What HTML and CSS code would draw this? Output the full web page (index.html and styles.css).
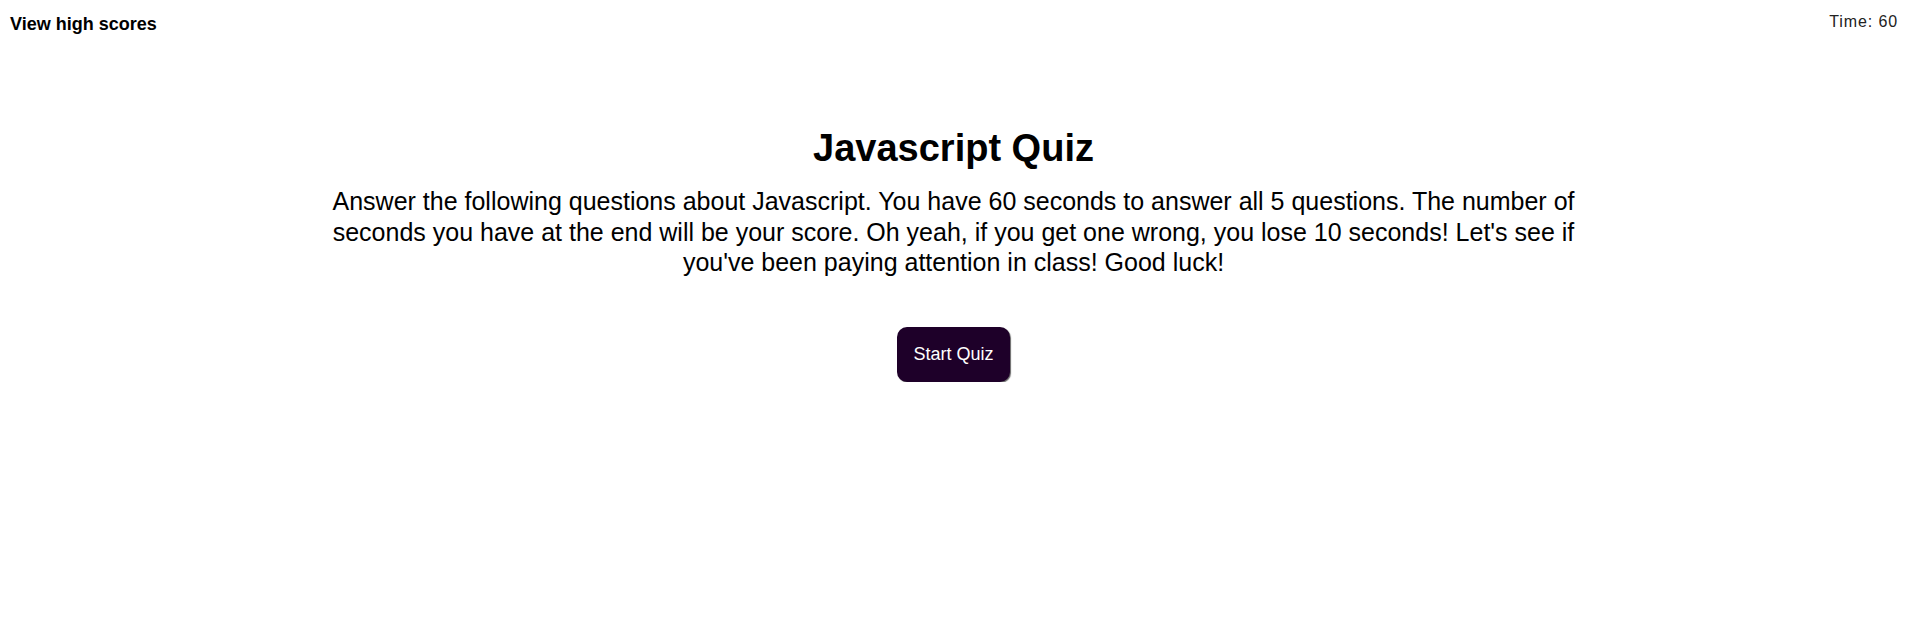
FILE: index.html
```html
<!DOCTYPE html>
<html lang="en">
<head>
<meta charset="utf-8">
<title>Javascript Quiz</title>
<link rel="stylesheet" href="styles.css">
</head>
<body>
<header class="topbar">
  <a class="scores-link" href="#">View high scores</a>
  <span class="timer">Time: 60</span>
</header>
<main class="intro">
  <h1 class="title">Javascript Quiz</h1>
  <p class="description">Answer the following questions about Javascript. You have 60 seconds to answer all 5 questions. The number of seconds you have at the end will be your score. Oh yeah, if you get one wrong, you lose 10 seconds! Let's see if you've been paying attention in class! Good luck!</p>
  <button class="start-btn" type="button">Start Quiz</button>
</main>
</body>
</html>
```

FILE: styles.css
```css
html, body {
  margin: 0;
  padding: 0;
  background: #ffffff;
  font-family: "Liberation Sans", Arial, Helvetica, sans-serif;
  color: #000;
}

.topbar {
  display: flex;
  justify-content: space-between;
  align-items: flex-start;
  padding: 14px 9px 0 10px;
}

.scores-link {
  font-weight: bold;
  font-size: 18px;
  color: #000;
  text-decoration: none;
}

.timer {
  font-size: 16px;
  color: #222;
  letter-spacing: 0.9px;
  margin-top: -1px;
}

.intro {
  display: flex;
  flex-direction: column;
  align-items: center;
  text-align: center;
  width: 68%;
  margin: 0 auto;
  padding-top: 90px;
}

.title {
  font-size: 38px;
  font-weight: bold;
  margin: 0;
  line-height: 46px;
}

.description {
  font-size: 25px;
  line-height: 30.5px;
  margin: 15px 0 0 0;
}

.start-btn {
  margin-top: 49px;
  width: 113px;
  height: 55px;
  background: #1e0029;
  color: #fff;
  border: none;
  border-radius: 10px;
  font-family: "Liberation Sans", Arial, Helvetica, sans-serif;
  font-size: 18px;
  box-shadow: 1px 1px 1px rgba(0,0,0,0.6);
  cursor: pointer;
}
```
